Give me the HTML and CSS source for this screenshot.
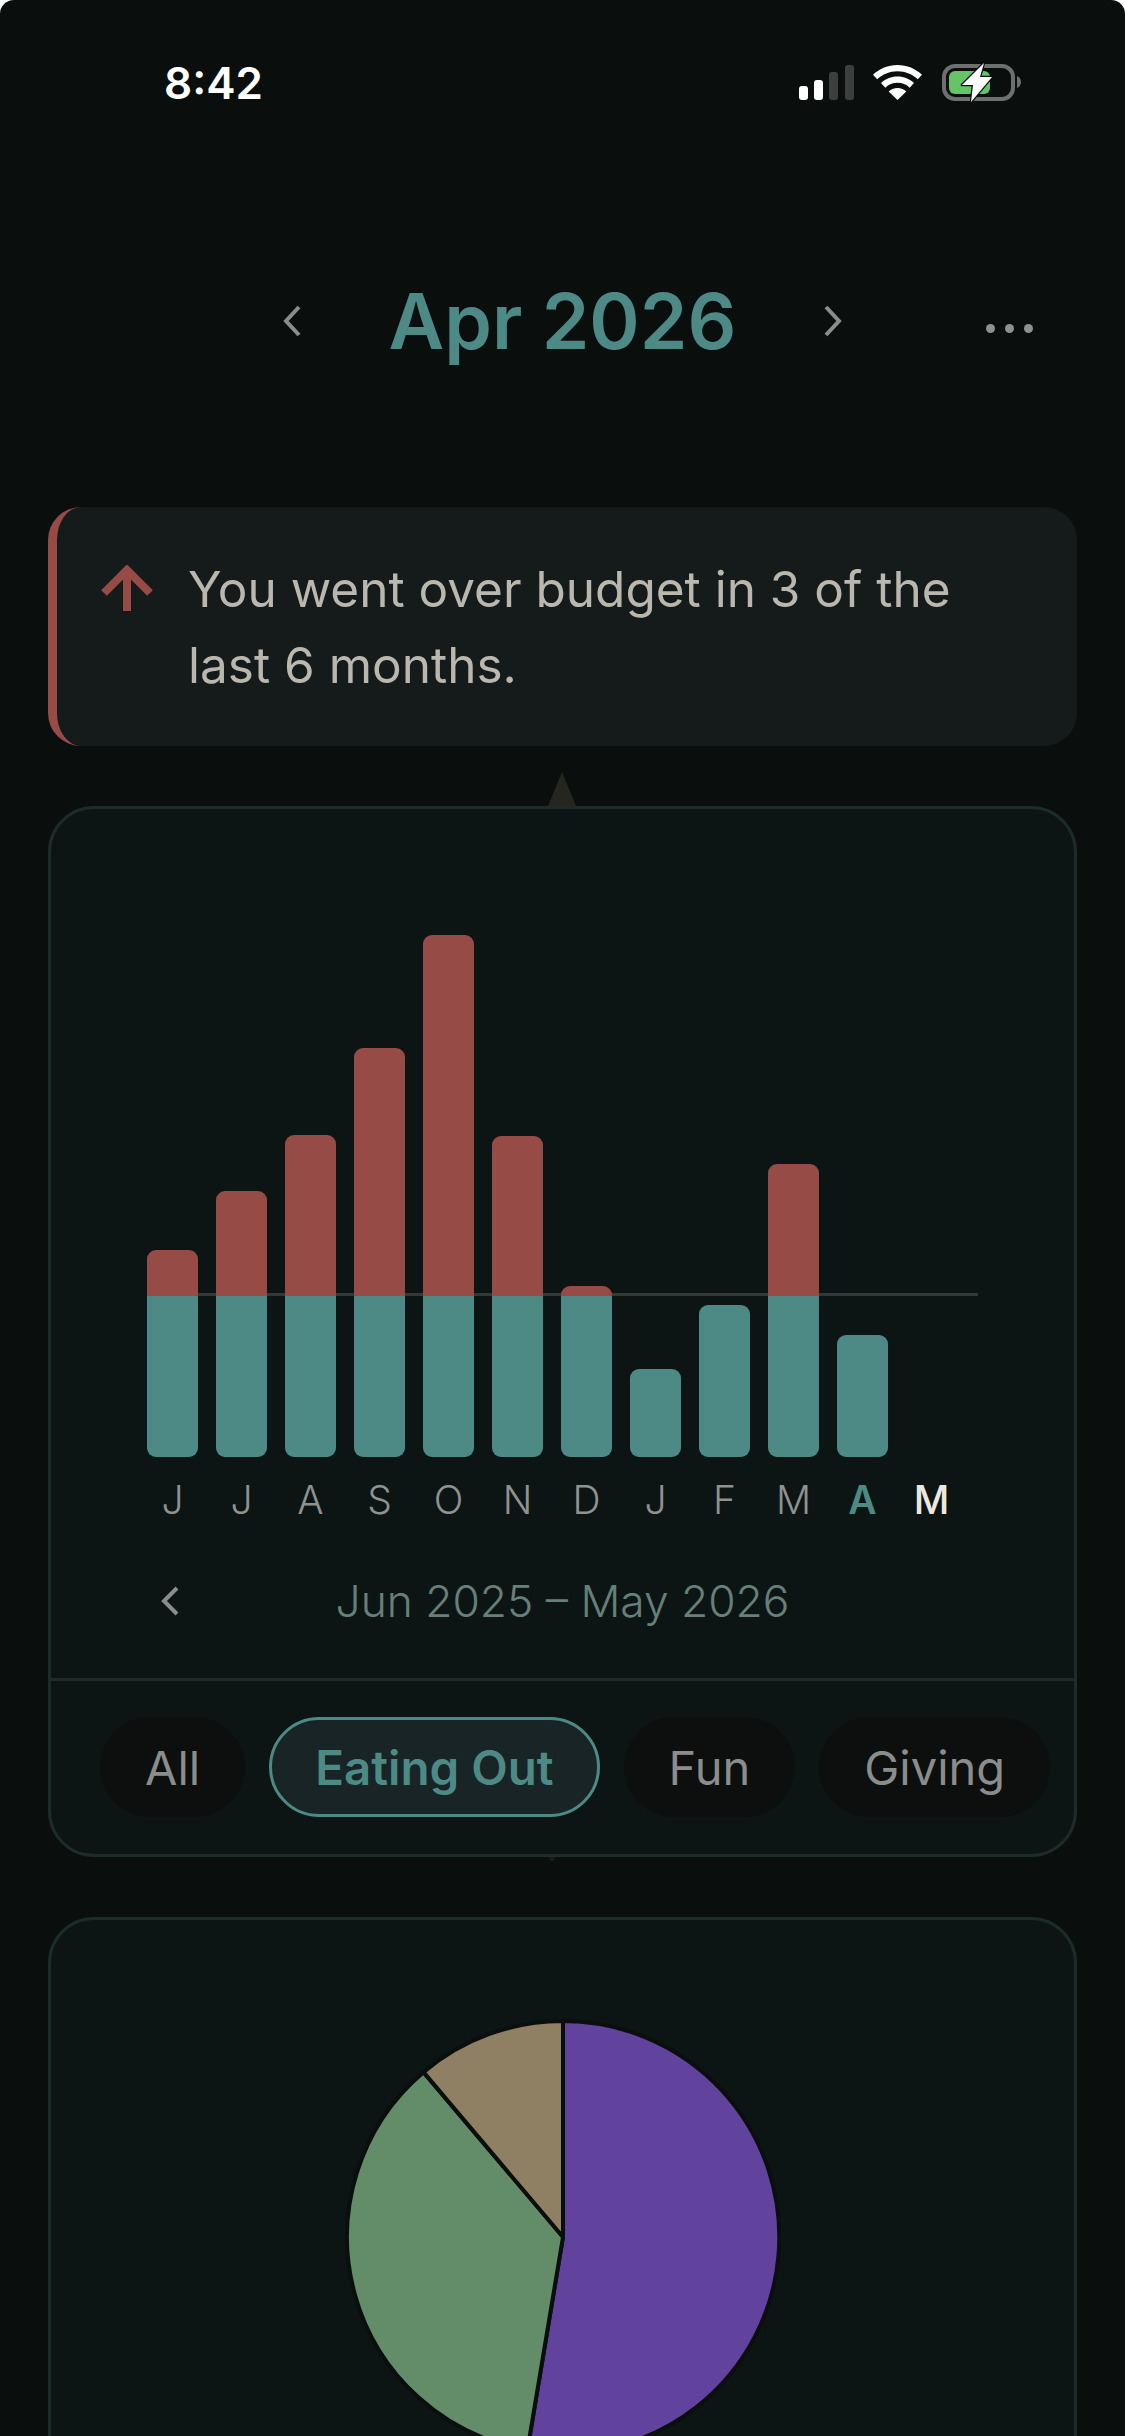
FILE: index.html
```html
<!DOCTYPE html>
<html lang="en">
<head>
    <meta charset="UTF-8">
    <meta name="viewport" content="width=device-width, initial-scale=1.0">
    <title>Monthly Budget</title>
    <link rel="stylesheet" href="styles.css">
</head>
<body>
    <div class="screen">
        <div class="status-bar">
            <span class="clock">8:42</span>
            <div class="status-icons">
                <svg width="55" height="35" viewBox="0 0 55 35">
                    <rect x="0" y="21" width="9" height="14" rx="3" fill="#fff"/>
                    <rect x="15" y="15" width="9" height="20" rx="3" fill="#fff"/>
                    <rect x="30" y="7" width="9" height="28" rx="3" fill="#3d3f3e"/>
                    <rect x="46" y="0" width="9" height="35" rx="3" fill="#3d3f3e"/>
                </svg>
                <svg class="wifi" width="49" height="35" viewBox="0 0 49 35">
                    <path d="M24.5 0C15 0 6.500 3.700 0 9.700l4.200 4.600C9.500 9.300 16.600 6.300 24.500 6.300s15 3 20.300 8l4.200-4.600C42.500 3.700 34 0 24.500 0z" fill="#fff"/>
                    <path d="M24.500 11.500c-6.400 0-12.200 2.500-16.500 6.500l4.300 4.700c3.200-3 7.500-4.900 12.200-4.900s9 1.900 12.200 4.900l4.300-4.700c-4.300-4-10.100-6.500-16.500-6.500z" fill="#fff"/>
                    <path d="M24.500 23c-3.400 0-6.500 1.300-8.800 3.400l8.800 8.600 8.800-8.600C31 24.300 27.900 23 24.500 23z" fill="#fff"/>
                </svg>
                <svg class="battery" width="79" height="39" viewBox="0 0 79 39">
                    <rect x="2" y="3" width="69" height="33" rx="11" fill="none" stroke="#6e706f" stroke-width="4"/>
                    <path d="M75 13c2.500 .8 4 3.200 4 6s-1.500 5.200-4 6z" fill="#6e706f"/>
                    <rect x="7" y="8" width="41" height="23" rx="6" fill="#65c466"/>
                    <path d="M42 0 20 22h11l-2 17 21-25H38z" fill="#fff" stroke="#0a0f0e" stroke-width="2.500" stroke-linejoin="round" paint-order="stroke"/>
                </svg>
            </div>
        </div>

        <div class="month-nav">
            <svg class="chevron" width="18" height="32" viewBox="0 0 18 32"><path d="M16 2 3 16l13 14"/></svg>
            <h1 class="month-title">Apr 2026</h1>
            <svg class="chevron" width="18" height="32" viewBox="0 0 18 32"><path d="M2 2l13 14L2 30"/></svg>
            <div class="more-dots"><i></i><i></i><i></i></div>
        </div>

        <div class="alert">
            <svg class="alert-arrow" width="52" height="46" viewBox="0 0 52 46">
                <path d="M26 46V5M3 28 26 5l23 23"/>
            </svg>
            <p>You went over budget in 3 of the last 6 months.</p>
        </div>

        <div class="card chart-card">
            <span class="notch"></span>
            <span class="notch-foot"></span>
            <div class="chart">
                <span class="budget-line"></span>
                <div class="bars">
                    <div class="bar"><span class="over" style="height:46px"></span><span class="base" style="height:161px"></span></div>
                    <div class="bar"><span class="over" style="height:105px"></span><span class="base" style="height:161px"></span></div>
                    <div class="bar"><span class="over" style="height:161px"></span><span class="base" style="height:161px"></span></div>
                    <div class="bar"><span class="over" style="height:248px"></span><span class="base" style="height:161px"></span></div>
                    <div class="bar"><span class="over" style="height:361px"></span><span class="base" style="height:161px"></span></div>
                    <div class="bar"><span class="over" style="height:160px"></span><span class="base" style="height:161px"></span></div>
                    <div class="bar"><span class="over" style="height:10px"></span><span class="base" style="height:161px"></span></div>
                    <div class="bar"><span class="base" style="height:88px"></span></div>
                    <div class="bar"><span class="base" style="height:152px"></span></div>
                    <div class="bar"><span class="over" style="height:132px"></span><span class="base" style="height:161px"></span></div>
                    <div class="bar"><span class="base" style="height:122px"></span></div>
                    <div class="bar"></div>
                </div>
                <div class="months">
                    <span>J</span><span>J</span><span>A</span><span>S</span><span>O</span><span>N</span>
                    <span>D</span><span>J</span><span>F</span><span>M</span>
                    <span class="selected">A</span><span class="current">M</span>
                </div>
            </div>
            <div class="range">
                <svg class="chevron range-back" width="18" height="30" viewBox="0 0 18 30"><path d="M16 2 3 15l13 13"/></svg>
                <span>Jun 2025 – May 2026</span>
            </div>
            <div class="filters">
                <span class="pill">All</span>
                <span class="pill active">Eating Out</span>
                <span class="pill">Fun</span>
                <span class="pill">Giving</span>
            </div>
        </div>

        <div class="card pie-card">
            <svg class="pie" width="436" height="436" viewBox="-218 -218 436 436">
                <path d="M0 0V-216A216 216 0 1 1 -35.600 213z" fill="#61429c"/>
                <path d="M0 0-35.600 213A216 216 0 0 1 -139.500 -164.900z" fill="#638d68"/>
                <path d="M0 0-139.500 -164.900A216 216 0 0 1 0 -216z" fill="#8f7f63"/>
            </svg>
        </div>
    </div>
</body>
</html>
```

FILE: styles.css
```css
* {
    box-sizing: border-box;
}
html, body {
    margin: 0;
    height: 100%;
    background-color: #fff;
}
body {
    font-family: Inter, "Liberation Sans", sans-serif;
    overflow: hidden;
}
.screen {
    height: 2436px;
    overflow: hidden;
    padding: 0 48px;
    background-color: #0a0f0e;
    border-radius: 14px 14px 0 0;
}

/* status bar */
.status-bar {
    display: flex;
    justify-content: space-between;
    align-items: center;
    height: 165px;
    padding: 0 56px 0 116px;
}
.clock {
    font-size: 44px;
    font-weight: 600;
    color: #fff;
}
.status-icons {
    display: flex;
    align-items: center;
    gap: 19px;
}
.status-icons .battery {
    margin-left: 1px;
}

/* month header */
.month-nav {
    position: relative;
    display: flex;
    justify-content: center;
    align-items: center;
    gap: 88px;
    height: 155px;
    margin-top: 78px;
}
.month-title {
    margin: 0;
    font-size: 76.5px;
    font-weight: 600;
    color: #4d8a85;
}
.chevron path {
    fill: none;
    stroke: #8a8d8c;
    stroke-width: 4;
}
.more-dots {
    position: absolute;
    top: 81px;
    right: 44px;
    display: flex;
    gap: 10px;
}
.more-dots i {
    width: 9px;
    height: 9px;
    border-radius: 50%;
    background-color: #8f9190;
}

/* over budget notice */
.alert {
    display: flex;
    gap: 35px;
    height: 239px;
    margin-top: 109px;
    padding: 58px 60px 0 44px;
    background-color: #151b1b;
    border-left: 9px solid #964b47;
    border-radius: 33px;
}
.alert-arrow {
    flex: none;
}
.alert-arrow path {
    fill: none;
    stroke: #964b47;
    stroke-width: 8;
}
.alert p {
    margin: -14px 0 0;
    font-size: 49.5px;
    font-weight: 400;
    line-height: 76px;
    color: #b9b7ae;
}

/* cards */
.card {
    position: relative;
    background-color: #0d1514;
    border: 3px solid #1b2c2b;
    border-radius: 46px;
}
.chart-card {
    height: 1051px;
    margin-top: 60px;
}
.notch {
    position: absolute;
    top: -37px;
    left: 497px;
    width: 28px;
    height: 34px;
    background-color: #25261f;
    clip-path: polygon(50% 0, 100% 100%, 0 100%);
}
.notch-foot {
    position: absolute;
    bottom: -8px;
    left: 497px;
    width: 8px;
    height: 5px;
    background-color: #1c1d18;
    clip-path: polygon(0 0, 100% 0, 50% 100%);
}
.chart {
    position: relative;
    padding: 0 0 0 96px;
}
.bars {
    position: relative;
    display: flex;
    align-items: flex-end;
    gap: 18px;
    height: 648px;
}
.bar {
    width: 51px;
    display: flex;
    flex-direction: column;
}
.bar span {
    display: block;
}
.over {
    background-color: #964b47;
    border-radius: 9px 9px 0 0;
}
.base {
    background-color: #4d8a85;
    border-radius: 0 0 9px 9px;
}
.bar > .base:first-child {
    border-radius: 9px;
}
.budget-line {
    position: absolute;
    top: 484px;
    left: 96px;
    width: 831px;
    height: 3px;
    background-color: #303838;
}
.months {
    display: flex;
    gap: 18px;
    margin-top: 20px;
}
.months span {
    width: 51px;
    text-align: center;
    font-size: 39px;
    font-weight: 300;
    line-height: 46px;
    color: #8f9291;
}
.months .selected {
    font-weight: 600;
    color: #4d8a85;
}
.months .current {
    font-weight: 500;
    color: #ece8df;
}
.range {
    position: relative;
    height: 102px;
    margin-top: 53px;
    text-align: center;
    font-size: 44.3px;
    font-weight: 300;
    line-height: 50px;
    color: #668079;
}
.range-back {
    position: absolute;
    top: 10px;
    left: 110px;
}
.filters {
    display: flex;
    gap: 24px;
    height: 139px;
    padding: 36px 0 0 49px;
    border-top: 3px solid #1b2c2b;
}
.pill {
    display: flex;
    align-items: center;
    justify-content: center;
    height: 100px;
    padding: 0 45px;
    font-size: 47px;
    font-weight: 400;
    color: #8a8d8c;
    background-color: #0c0f0e;
    border-radius: 50px;
    white-space: nowrap;
}
.pill.active {
    padding: 0 43px;
    font-size: 47.5px;
    font-weight: 600;
    color: #4d8a85;
    background-color: #182425;
    border: 3px solid #4d8a85;
}

.pie-card {
    height: 800px;
    margin-top: 60px;
    padding: 99px 0 0 294px;
}
.pie {
    display: block;
}
.pie path {
    stroke: #0a0f0e;
    stroke-width: 4;
    stroke-linejoin: round;
}
```
